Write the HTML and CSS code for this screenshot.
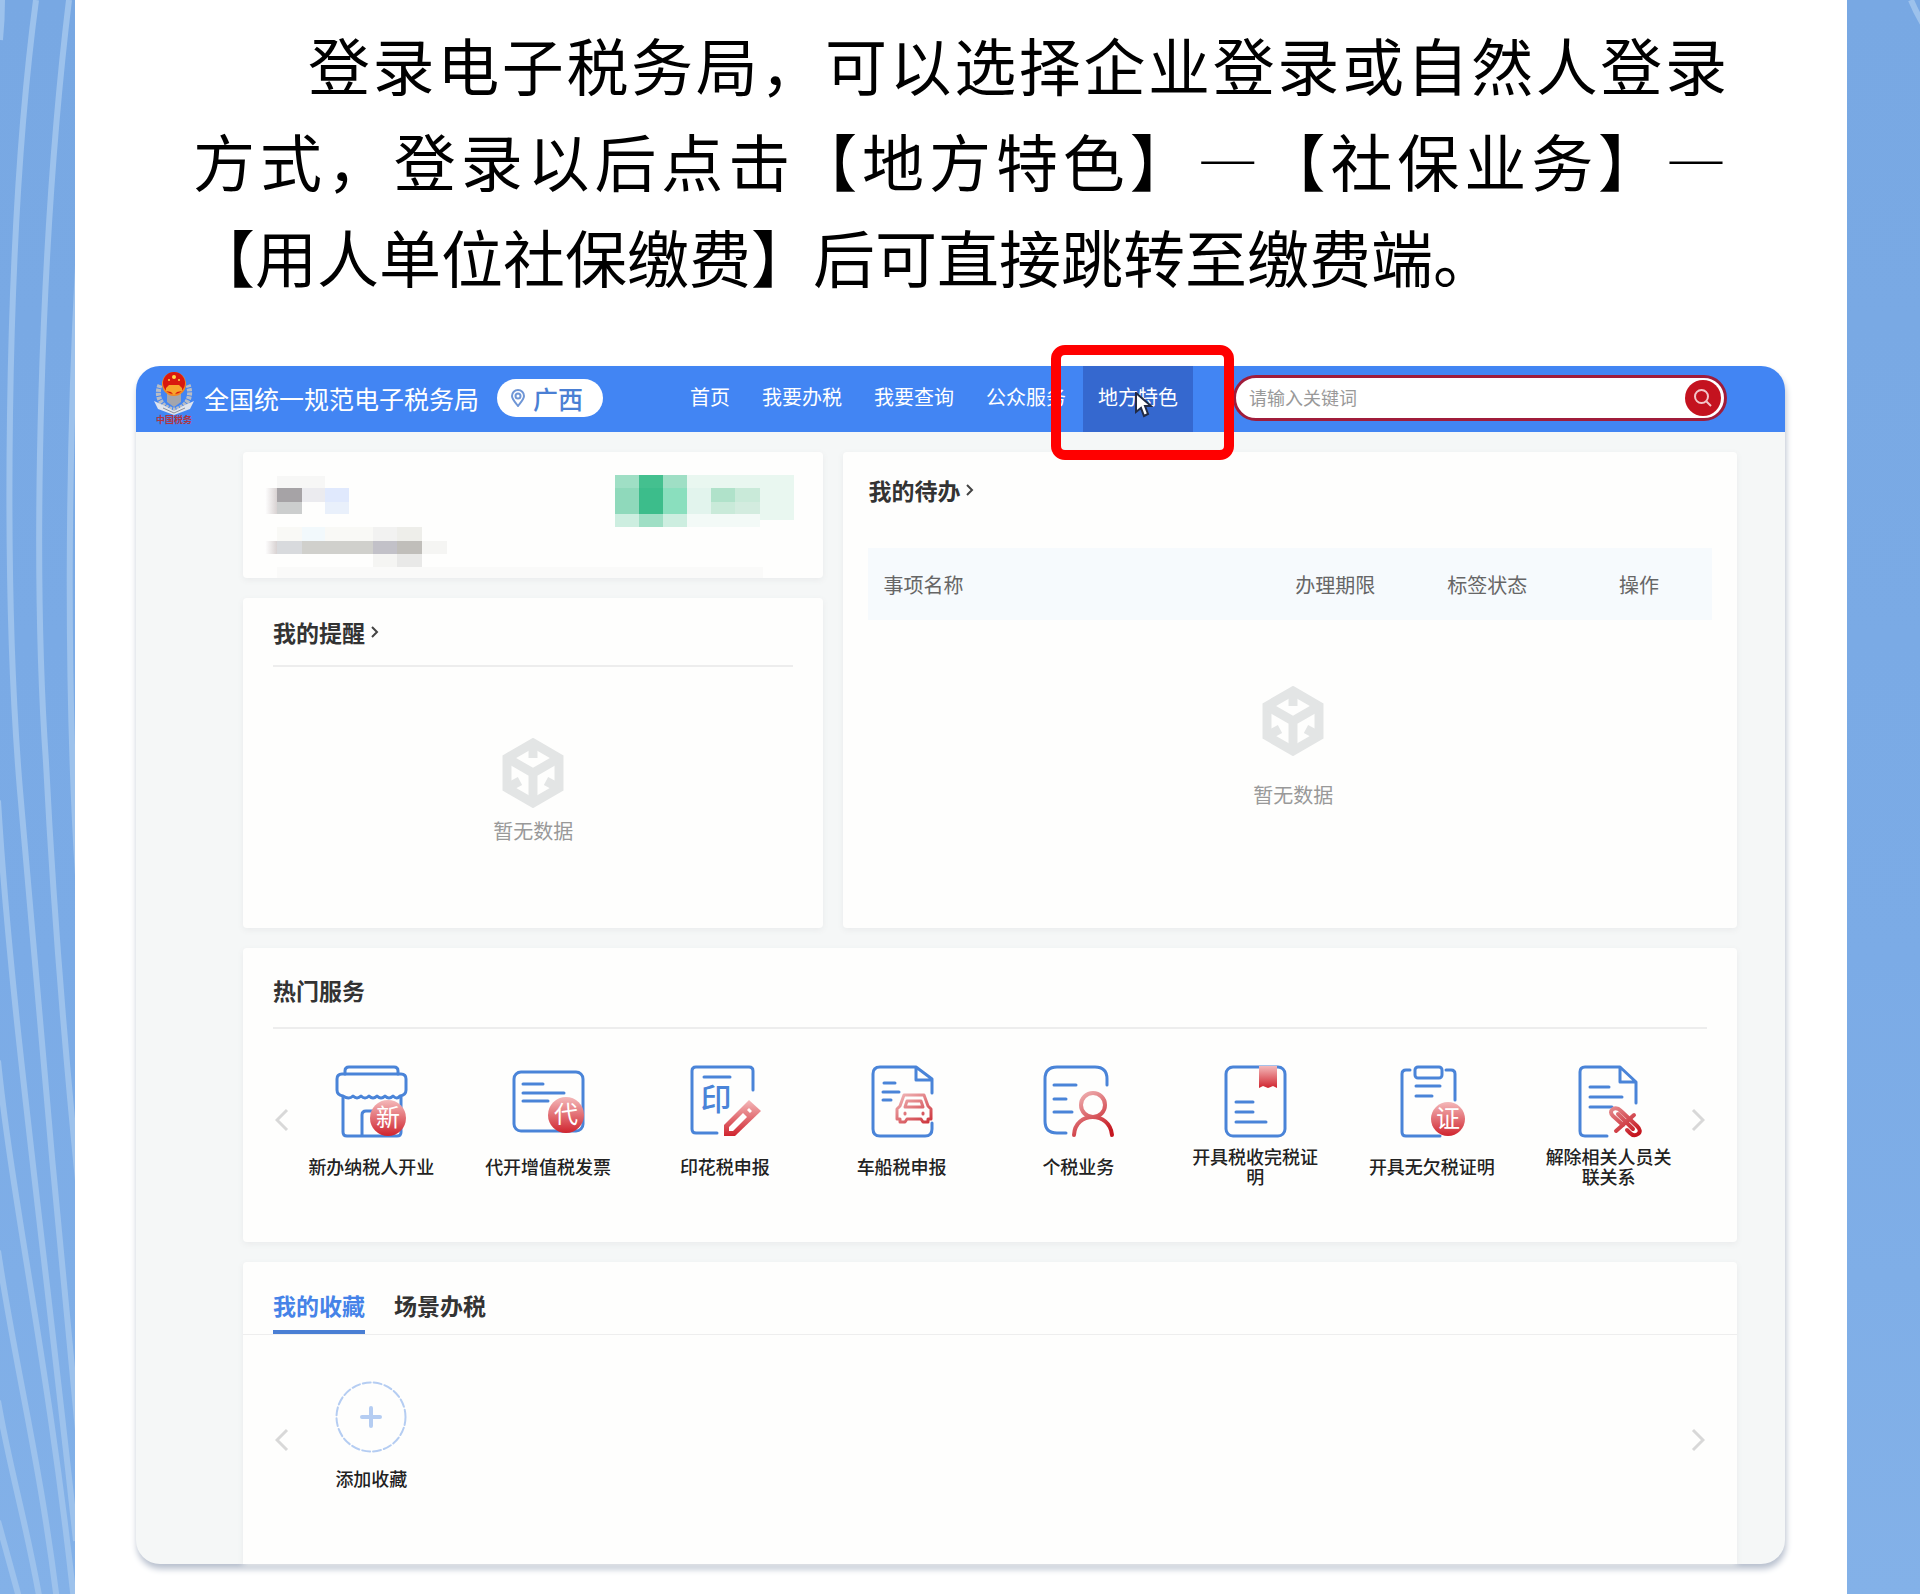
FILE: index.html
```
<!DOCTYPE html>
<html lang="zh-CN">
<head>
  <meta charset="UTF-8">
  <meta name="viewport" content="width=device-width, initial-scale=1.0">
  <title>全国统一规范电子税务局</title>
  <link rel="stylesheet" href="styles.css">
</head>
<body>
  <!-- 左侧波纹 -->
  <svg class="waves" viewBox="0 0 75 1594" preserveAspectRatio="none" aria-hidden="true">
    <path d="M2 0Q2 20 0 40"/>
    <path d="M36 0C4 240 4 600 20 790C34 960 58 1230 78 1430"/>
    <path d="M69 0C40 240 32 560 46 762C54 920 66 1060 78 1180"/>
    <path d="M80 230C67 450 66 700 79 890"/>
    <path d="M-2 800C10 1000 40 1210 76 1540"/>
    <path d="M-2 1060C12 1200 48 1360 74 1600"/>
    <path d="M-2 1250C14 1360 40 1460 57 1600"/>
    <path d="M-2 1400C10 1470 26 1520 40 1600"/>
    <path d="M-2 1520L20 1600"/>
  </svg>

  <main class="sheet">
    <div class="intro">
      <p class="line first">登录电子税务局，可以选择企业登录或自然人登录</p>
      <p class="line">方式，登录以后点击【地方特色】—【社保业务】—</p>
      <p class="line last">【用人单位社保缴费】后可直接跳转至缴费端。</p>
    </div>

    <div class="screen">
      <header class="header">
        <svg class="logo" viewBox="0 0 42 54" aria-hidden="true">
          <path d="M7 14C2 26 9 37 21 39C33 37 40 26 35 14" fill="none" stroke="#b9bdc4" stroke-width="5" stroke-dasharray="3 1"/>
          <path d="M1 30L12 35L21 40L30 35L41 30L37 38L21 44L5 38Z" fill="#dfe4ee"/>
          <path d="M10 37L21 42L32 37" fill="none" stroke="#8c8f98" stroke-width="1"/>
          <path d="M14 22L21 20L28 22V31L21 36L14 31Z" fill="#a3a5ac"/>
          <circle cx="21" cy="13" r="12" fill="#f08a25"/>
          <circle cx="21" cy="12" r="11" fill="#d9180f"/>
          <circle cx="21" cy="6" r="2" fill="#ffd84a"/>
          <circle cx="16" cy="9" r="1" fill="#ffd84a"/>
          <circle cx="26" cy="9" r="1" fill="#ffd84a"/>
          <path d="M13 17L16 14H26L29 17V20L24 21L21 24L18 21L13 20Z" fill="#f7a52c"/>
          <text x="21" y="52" text-anchor="middle" class="logo-text">中国税务</text>
        </svg>
        <h1>全国统一规范电子税务局</h1>
        <button type="button" class="region">
          <svg width="14" height="18" viewBox="0 0 14 18" aria-hidden="true">
            <path d="M7 17C4 13 1 10 1 7A6 6 0 0 1 13 7C13 10 10 13 7 17Z"/>
            <circle cx="7" cy="7" r="2.5"/>
          </svg>
          广西
        </button>
        <nav class="nav">
          <a href="#">首页</a>
          <a href="#">我要办税</a>
          <a href="#">我要查询</a>
          <a href="#">公众服务</a>
          <a href="#" class="active">地方特色
            <svg class="cursor" viewBox="0 0 18 26" aria-hidden="true">
              <path d="M1 1V20L6 16L9 24L13 22L10 14H16Z"/>
            </svg>
            <span class="mark"></span>
          </a>
        </nav>
        <form class="search">
          <input type="text" placeholder="请输入关键词" aria-label="请输入关键词">
          <button type="button" aria-label="搜索">
            <svg width="20" height="20" viewBox="0 0 20 20" aria-hidden="true">
              <circle cx="8.5" cy="8.5" r="6.5"/>
              <path d="M13.5 13.5L18 18"/>
            </svg>
          </button>
        </form>
      </header>

      <div class="content">
        <div class="top">
          <div class="left">
            <section class="card user">
              <svg width="580" height="126" viewBox="0 0 580 126" aria-hidden="true">
                <defs>
                  <linearGradient id="fade">
                    <stop offset="0" stop-color="#fff"/>
                    <stop offset="1" stop-color="#d8d2d2"/>
                  </linearGradient>
                </defs>
                <path fill="#f7f7f6" d="M34 24h48v12h-48z"/>
                <path fill="url(#fade)" d="M22 36h12v26h-12zM22 89h12v13h-12z"/>
                <path fill="#a6a3a6" d="M34 36h25v14h-25z"/>
                <path fill="#cccece" d="M34 50h25v12h-25z"/>
                <path fill="#ebebef" d="M59 36h23v14h-23z"/>
                <path fill="#e0e9fd" d="M82 36h24v14h-24z"/>
                <path fill="#e9f0fb" d="M82 50h24v12h-24z"/>
                <path fill="#f9f9f6" d="M34 75h96v14h-96z"/>
                <path fill="#f2f9fc" d="M59 75h23v14h-23z"/>
                <path fill="#f2f2f1" d="M130 75h24v14h-24z"/>
                <path fill="#eeeeea" d="M154 75h25v14h-25z"/>
                <path fill="#d8dadd" d="M34 89h25v13h-25z"/>
                <path fill="#d0d0cc" d="M59 89h71v13h-71z"/>
                <path fill="#c2c1c8" d="M130 89h24v13h-24z"/>
                <path fill="#c0beba" d="M154 89h25v13h-25z"/>
                <path fill="#f5f5f3" d="M179 89h25v13h-25zM130 102h24v13h-24z"/>
                <path fill="#e9e9e8" d="M154 102h25v13h-25z"/>
                <path fill="#fafaf9" d="M34 115h486v11h-486z"/>
                <path fill="#e9f7f0" d="M444 23h107v45h-34v-6h-73z"/>
                <path fill="#f3faf7" d="M444 62h73v13h-73z"/>
                <path fill="#9fdfc5" d="M372 23h24v13h-24zM420 23h24v13h-24zM396 62h24v13h-24z"/>
                <path fill="#8fd9bb" d="M372 36h24v26h-24z"/>
                <path fill="#44c08f" d="M396 23h24v13h-24z"/>
                <path fill="#3cbd8b" d="M396 36h24v26h-24z"/>
                <path fill="#8adfbe" d="M420 36h24v26h-24z"/>
                <path fill="#cdeee0" d="M372 62h24v13h-24zM420 62h24v13h-24z"/>
                <path fill="#e2f4ed" d="M444 36h24v26h-24z"/>
                <path fill="#b0e2ca" d="M468 36h24v14h-24z"/>
                <path fill="#c9ead9" d="M468 50h24v12h-24zM492 36h25v14h-25z"/>
                <path fill="#d3ecdf" d="M492 50h25v12h-25z"/>
              </svg>
            </section>
            <section class="card remind">
              <h2 class="more"><a href="#">我的提醒<svg width="8" height="14" viewBox="0 0 8 14" aria-hidden="true"><path d="M1 2L6 7L1 12"/></svg></a></h2>
              <div class="empty">
                <svg class="box" viewBox="0 0 64 70" aria-hidden="true">
                  <path d="M32 5L58 20V50L32 65L6 50V20Z"/>
                  <path d="M6 20L32 35L58 20M32 35V65M32 5V20M6 50L19 43M58 50L45 43"/>
                </svg>
                <p>暂无数据</p>
              </div>
            </section>
          </div>
          <section class="card todo">
            <h2 class="more"><a href="#">我的待办<svg width="8" height="14" viewBox="0 0 8 14" aria-hidden="true"><path d="M1 2L6 7L1 12"/></svg></a></h2>
            <table>
              <thead>
                <tr>
                  <th class="name">事项名称</th>
                  <th>办理期限</th>
                  <th>标签状态</th>
                  <th>操作</th>
                </tr>
              </thead>
            </table>
            <div class="empty">
              <svg class="box" viewBox="0 0 64 70" aria-hidden="true">
                <path d="M32 5L58 20V50L32 65L6 50V20Z"/>
                <path d="M6 20L32 35L58 20M32 35V65M32 5V20M6 50L19 43M58 50L45 43"/>
              </svg>
              <p>暂无数据</p>
            </div>
          </section>
        </div>

        <!-- 热门服务 -->
        <section class="card hot">
          <h2>热门服务</h2>
          <div class="carousel">
            <button type="button" class="arrow prev" aria-label="上一页"><svg width="14" height="24" viewBox="0 0 14 24"><path d="M12 2L2 12L12 22"/></svg></button>
            <ul class="services">
              <li><a href="#">
                <svg class="icon" viewBox="0 0 72 72" aria-hidden="true">
                  <defs>
                    <linearGradient id="red" x1="0" y1="0" x2="0" y2="1">
                      <stop offset="0" stop-color="#f4b9ba"/>
                      <stop offset="1" stop-color="#d0242e"/>
                    </linearGradient>
                    <linearGradient id="red-line" gradientUnits="userSpaceOnUse" x1="36" y1="28" x2="62" y2="70">
                      <stop offset="0" stop-color="#f0b4b5"/>
                      <stop offset="1" stop-color="#c5161f"/>
                    </linearGradient>
                  </defs>
                  <path d="M10 9V6Q10 2 14 2H59Q63 2 63 6V9"/>
                  <path d="M8 31Q2 30 2 25V14Q2 9 7 9H66Q71 9 71 14V25Q71 30 65 31Q62 35 58 31Q54 35 50 31Q46 35 42 31Q38 35 34 31Q30 35 26 31Q22 35 18 31Q14 35 8 31Z"/>
                  <path d="M8 32V67Q8 71 12 71H62Q66 71 66 67V32M27 71V50Q27 46 31 46H40"/>
                  <circle class="badge" cx="53" cy="53" r="18"/>
                  <text x="53" y="61" class="badge-text">新</text>
                </svg>
                <span>新办纳税人开业</span>
              </a></li>
              <li><a href="#">
                <svg class="icon" viewBox="0 0 72 72" aria-hidden="true">
                  <rect x="2" y="7" width="69" height="59" rx="7"/>
                  <path d="M11 19H31M11 28H52M11 36H36"/>
                  <circle class="badge" cx="54" cy="50" r="18"/>
                  <text x="54" y="58" class="badge-text">代</text>
                </svg>
                <span>代开增值税发票</span>
              </a></li>
              <li><a href="#">
                <svg class="icon" viewBox="0 0 72 72" aria-hidden="true">
                  <path d="M64 25V6Q64 2 60 2H7Q3 2 3 6V64Q3 68 7 68H28M15 12H41"/>
                  <text x="27" y="45" class="stamp-text">印</text>
                  <path class="red-fill" d="M35 60L60 35L72 46L46 71H35Z"/>
                  <path class="hole" d="M40 62L54 48L58 52L44 66H40Z M58 45L60 43L63 46L61 48Z"/>
                </svg>
                <span>印花税申报</span>
              </a></li>
              <li><a href="#">
                <svg class="icon" viewBox="0 0 72 72" aria-hidden="true">
                  <path d="M66 28V14L50 2H14Q7 2 7 9V64Q7 71 14 71H59Q66 71 66 64V58M50 2V15H66"/>
                  <path d="M18 18H29M17 27H33M17 35H25"/>
                  <path class="red-line" d="M38 30H58L62 41L65 44V54H62V57H57L55 54H41L39 57H34V54H31V44L34 41Z"/>
                  <path class="red-line" d="M41 36H55L57 42H39Z"/>
                  <path class="red-line" d="M39 48V49M57 48V49"/>
                </svg>
                <span>车船税申报</span>
              </a></li>
              <li><a href="#">
                <svg class="icon" viewBox="0 0 72 72" aria-hidden="true">
                  <path d="M65 20V14Q65 2 53 2H15Q3 2 3 14V56Q3 68 15 68H24M12 20H34M12 34H24M12 47H30"/>
                  <g class="person">
                    <circle cx="51" cy="40" r="12"/>
                    <path d="M32 70C33 46 68 46 70 70"/>
                  </g>
                </svg>
                <span>个税业务</span>
              </a></li>
              <li><a href="#">
                <svg class="icon" viewBox="0 0 72 72" aria-hidden="true">
                  <rect x="7" y="2" width="59" height="69" rx="7"/>
                  <path d="M17 37H34M17 47H34M17 57H47"/>
                  <path class="red-fill" d="M40 1H58V23L54 21L49 23L44 21L40 23Z"/>
                </svg>
                <span>开具税收完税证明</span>
              </a></li>
              <li><a href="#">
                <svg class="icon" viewBox="0 0 72 72" aria-hidden="true">
                  <path d="M14 5H10Q6 5 6 9V67Q6 71 10 71H44M50 5H55Q59 5 59 9V35M20 21H44M20 31H36"/>
                  <rect x="19" y="2" width="27" height="11" rx="3"/>
                  <circle class="badge" cx="52" cy="54" r="17"/>
                  <text x="52" y="62" class="badge-text">证</text>
                </svg>
                <span>开具无欠税证明</span>
              </a></li>
              <li><a href="#">
                <svg class="icon" viewBox="0 0 72 72" aria-hidden="true">
                  <path d="M63 38V17L47 2H12Q7 2 7 7V66Q7 71 12 71H34M47 2V17H63M17 22H36M17 32H49M17 42H39"/>
                  <g class="link">
                    <path d="M50 60L40 51Q36 47 40 44Q44 42 48 46L64 61Q69 66 65 69Q61 72 57 68L54 65M45 49L60 64"/>
                    <path d="M43 66L61 50"/>
                  </g>
                </svg>
                <span>解除相关人员关联关系</span>
              </a></li>
            </ul>
            <button type="button" class="arrow next" aria-label="下一页"><svg width="14" height="24" viewBox="0 0 14 24"><path d="M2 2L12 12L2 22"/></svg></button>
          </div>
        </section>

        <!-- 我的收藏 -->
        <section class="card favorite">
          <div class="tabs">
            <button type="button" class="active">我的收藏</button>
            <button type="button">场景办税</button>
          </div>
          <div class="carousel">
            <button type="button" class="arrow prev" aria-label="上一页"><svg width="14" height="24" viewBox="0 0 14 24"><path d="M12 2L2 12L12 22"/></svg></button>
            <ul class="services">
              <li><a href="#">
                <svg class="icon add" viewBox="0 0 72 72" aria-hidden="true">
                  <circle cx="36" cy="36" r="34.5"/>
                  <path d="M36 27V45M27 36H45"/>
                </svg>
                <span>添加收藏</span>
              </a></li>
            </ul>
            <button type="button" class="arrow next" aria-label="下一页"><svg width="14" height="24" viewBox="0 0 14 24"><path d="M2 2L12 12L2 22"/></svg></button>
          </div>
        </section>
      </div>
    </div>
  </main>

  <svg class="waves" viewBox="0 0 73 1594" preserveAspectRatio="none" aria-hidden="true">
    <path d="M64 0Q69 12 76 24"/>
  </svg>
</body>
</html>
```
FILE: styles.css
```
* {
  box-sizing: border-box;
}
body {
  margin: 0;
  display: grid;
  grid-template-columns: 75px 1fr 73px;
  min-height: 100vh;
  font-family: "Noto Sans CJK SC", sans-serif;
  color: #333;
  background: linear-gradient(#78a8e3, #7babe6 60%, #83b1e8);
}
h1, h2, p, ul {
  margin: 0;
  padding: 0;
}
a {
  color: inherit;
  text-decoration: none;
}
button {
  padding: 0;
  border: none;
  background: none;
  font-family: inherit;
  cursor: pointer;
}
svg {
  display: block;
  fill: none;
}
.waves {
  width: 100%;
  height: 100%;
  overflow: hidden;
  stroke: #9dc2ec;
  stroke-width: 6;
}
.sheet {
  padding: 16px 0 31px;
  background: #fff;
}

/* 说明文字 */
.intro {
  margin: 0 120px 62px 118px;
  color: #000;
  font-size: 62px;
  line-height: 96px;
}
.line {
  text-align: justify;
  text-align-last: justify;
  white-space: nowrap;
}
.first {
  padding-left: 115px;
}
.last {
  text-align-last: left;
}

.screen {
  margin: 0 62px 0 61px;
  border-radius: 24px;
  background: #f5f7f7;
  box-shadow: 1px 5px 6px #b9c1cf;
}

/* 顶部导航 */
.header {
  display: flex;
  align-items: center;
  height: 66px;
  padding: 0 58px 2px 17px;
  border-radius: 24px 24px 0 0;
  background: #4285f3;
  color: #fff;
}
.logo {
  width: 42px;
  height: 54px;
}
.logo-text {
  fill: #b3343f;
  font-size: 9px;
  font-weight: bold;
}
h1 {
  margin-left: 9px;
  font-size: 25px;
  font-weight: 400;
  line-height: 38px;
  white-space: nowrap;
}
.region {
  display: flex;
  align-items: center;
  gap: 8px;
  width: 106px;
  height: 38px;
  margin-left: 18px;
  padding-left: 14px;
  border-radius: 19px;
  background: #fff;
  color: #4a7fd4;
  font-size: 25px;
  font-weight: 500;
  line-height: 36px;
}
.region svg {
  stroke: #6f96d6;
  stroke-width: 2;
}
.nav {
  display: flex;
  gap: 2px;
  margin: 0 0 -2px 72px;
}
.nav a {
  position: relative;
  height: 66px;
  padding: 0 15px;
  font-size: 20px;
  line-height: 62px;
  white-space: nowrap;
}
.nav .active {
  background: #3568cf;
}
.cursor {
  position: absolute;
  top: 26px;
  left: 52px;
  width: 18px;
  height: 26px;
  fill: #fff;
  stroke: #222b45;
  stroke-width: 2;
}
.mark {
  position: absolute;
  inset: -21px -41px -28px -32px;
  border: 10px solid #f00;
  border-radius: 14px;
}
.search {
  display: flex;
  flex: 1;
  align-items: center;
  height: 46px;
  margin-left: 40px;
  padding: 0 3px 0 13px;
  border: 3px solid #a01c3a;
  border-radius: 23px;
  background: #fff;
}
.search input {
  flex: 1;
  min-width: 0;
  height: 36px;
  padding: 0 0 2px;
  border: none;
  outline: none;
  background: none;
  font-family: inherit;
  font-size: 18px;
}
.search input::placeholder {
  color: #999;
}
.search button {
  display: grid;
  place-items: center;
  width: 36px;
  height: 36px;
  border-radius: 50%;
  background: #c4121f;
}
.search svg {
  stroke: #f3c6c9;
  stroke-width: 2;
}

/* 内容区 */
.content {
  display: flex;
  flex-direction: column;
  gap: 20px;
  padding: 20px 48px 0 107px;
}
.card {
  border-radius: 4px;
  background: #fefefd;
  box-shadow: 0 2px 6px #e9ebec;
}
.top {
  display: grid;
  grid-template-columns: 580fr 893fr;
  gap: 20px;
}
.left {
  display: flex;
  flex-direction: column;
  gap: 20px;
}
.user {
  overflow: hidden;
}
.remind {
  padding: 19px 30px 82px;
}
h2 {
  font-size: 23px;
  line-height: 30px;
}
.more a {
  display: flex;
  align-items: center;
  gap: 6px;
}
.more svg {
  stroke: #444;
  stroke-width: 2;
}
.remind h2 {
  padding-bottom: 18px;
  border-bottom: 2px solid #ededed;
}
.empty {
  display: flex;
  flex-direction: column;
  align-items: center;
  gap: 8px;
  margin-top: 71px;
  color: #999;
  font-size: 20px;
  line-height: 30px;
}
.box {
  width: 64px;
  height: 70px;
  stroke: #e3e5e5;
  stroke-width: 9;
}
.todo {
  padding: 23px 25px 24px;
}
table {
  width: 100%;
  margin-top: 43px;
  border-collapse: collapse;
  table-layout: fixed;
  background: #f6fafd;
}
th {
  width: 18%;
  height: 72px;
  padding: 0 0 0 6px;
  color: #666;
  font-size: 20px;
  font-weight: 400;
}
.name {
  width: 46%;
  padding-left: 15px;
  text-align: left;
}
.todo .empty {
  gap: 24px;
  margin-top: 66px;
  padding-left: 6px;
}

.hot {
  padding: 27px 30px 56px;
}
.hot h2 {
  padding-bottom: 22px;
  border-bottom: 2px solid #ededed;
}
.carousel {
  position: relative;
}
.services {
  display: grid;
  grid-template-columns: repeat(8, 1fr);
  margin: 0 10px;
  padding-top: 36px;
  list-style: none;
}
.services a {
  display: flex;
  flex-direction: column;
  align-items: center;
}
.services span {
  display: flex;
  align-items: center;
  width: 130px;
  height: 40px;
  margin-top: 9px;
  justify-content: center;
  text-align: center;
  color: #222;
  font-size: 18px;
  font-weight: 500;
  line-height: 20px;
}
.icon {
  width: 72px;
  height: 72px;
  overflow: visible;
  stroke: #4a84d8;
  stroke-width: 3;
  stroke-linecap: round;
  stroke-linejoin: round;
}
.icon .badge {
  fill: url(#red);
  stroke: none;
}
.icon text {
  stroke: none;
  text-anchor: middle;
}
.badge-text {
  fill: #fff;
  font-size: 24px;
}
.stamp-text {
  fill: #4a84d8;
  font-size: 31px;
  font-weight: 500;
}
.icon .red-fill {
  fill: url(#red);
  stroke: none;
}
.icon .hole {
  fill: #fff;
  stroke: none;
}
.icon .red-line, .person, .link {
  stroke: url(#red-line);
}
.person, .link {
  stroke-width: 4;
}
.arrow {
  position: absolute;
  top: 79px;
}
.arrow svg {
  stroke: #d8d8d8;
  stroke-width: 3;
}
.prev {
  left: 2px;
}
.next {
  right: 2px;
}

.favorite {
  padding-bottom: 66px;
  border-radius: 4px 4px 0 0;
}
.tabs {
  display: flex;
  gap: 29px;
  padding: 0 30px;
  border-bottom: 1px solid #eee;
}
.tabs button {
  height: 72px;
  padding-top: 20px;
  padding-bottom: 2px;
  border-bottom: 4px solid transparent;
  color: #333;
  font-size: 23px;
  font-weight: bold;
}
.tabs .active {
  border-color: #4a7fd4;
  color: #4683e8;
}
.favorite .carousel {
  margin: 0 30px;
}
.favorite .services {
  padding-top: 46px;
}
.favorite .services span {
  margin-top: 5px;
}
.favorite .arrow {
  top: 93px;
}
.add {
  stroke: #b5cdf2;
}
.add circle {
  stroke-width: 2;
  stroke-dasharray: 8 3;
}
.add path {
  stroke-width: 4;
}
```
